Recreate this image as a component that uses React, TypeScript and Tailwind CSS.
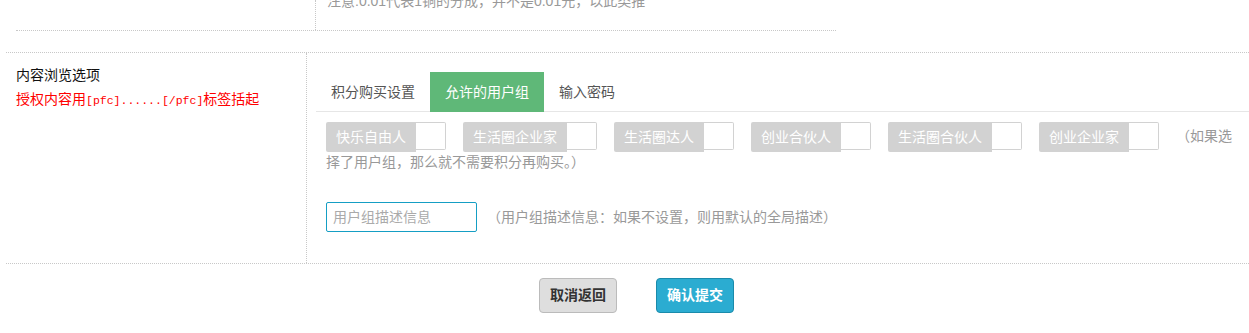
import React from 'react'

const groups = ['快乐自由人', '生活圈企业家', '生活圈达人', '创业合伙人', '生活圈合伙人', '创业企业家']

const Check: React.FC<{ label: string }> = ({ label }) => (
  <span className="inline-flex h-[30px] align-middle mr-[17px] cursor-pointer">
    <span className="bg-[#d2d2d2] text-white px-[10px] leading-[30px] h-[30px] rounded-l-[2px]">{label}</span>
    <span className="w-[30px] h-[28px] bg-white border border-l-0 border-[#d2d2d2] rounded-r-[2px]" />
  </span>
)

const App: React.FC = () => {
  return (
    <div
      className="w-full h-[333px] overflow-hidden bg-white text-[14px] text-[#333]"
      style={{ fontFamily: '"Liberation Sans", "Noto Sans CJK SC", sans-serif' }}
    >
      {/* previous row, scrolled off */}
      <div className="ml-[16px] w-[820px] h-[31px] flex border-b border-dotted border-[#c8c8c8] overflow-hidden">
        <div className="w-[299px] shrink-0" />
        <div className="flex-1 border-l border-dotted border-[#c8c8c8] pl-[11px]">
          <p className="-mt-[9px] leading-[20px] text-[#999]">注意:0.01代表1铜的分成，并不是0.01元，以此类推</p>
        </div>
      </div>

      {/* content browse options */}
      <div className="mt-[21px] ml-[6px] flex border-y border-dotted border-[#c8c8c8]">
        <div className="w-[301px] shrink-0 border-r border-dotted border-[#c8c8c8] px-[10px] pt-[10px] leading-[24px]">
          <div className="text-[#111]">内容浏览选项</div>
          <div className="text-[#f00]">
            授权内容用<span className="text-[11.5px]" style={{ fontFamily: '"Liberation Mono", monospace' }}>[pfc]......[/pfc]</span>标签括起
          </div>
        </div>

        <div className="flex-1 pl-[9px] pt-[19px] pb-[21px]">
          <div className="flex h-[40px] border-b border-[#e6e6e6] text-[#555]">
            <div className="px-[15px] leading-[40px]">积分购买设置</div>
            <div className="px-[15px] h-[40px] leading-[40px] bg-[#5fb878] text-white">允许的用户组</div>
            <div className="px-[15px] leading-[40px]">输入密码</div>
          </div>

          <div className="px-[10px] pt-[10px] pb-[10px]">
            <p className="leading-[20px] text-[#999]">
              {groups.map((g) => (
                <Check key={g} label={g} />
              ))}
              （如果选择了用户组，那么就不需要积分再购买。）
            </p>

            <div className="mt-[30px] flex items-center gap-[10px]">
              <input
                placeholder="用户组描述信息"
                className="w-[151px] h-[30px] px-[6px] border border-[#159ec4] rounded-[2px] outline-none placeholder:text-[#aaa]"
              />
              <span className="text-[#999]">（用户组描述信息：如果不设置，则用默认的全局描述）</span>
            </div>
          </div>
        </div>
      </div>

      <div className="mt-[14px] flex justify-center gap-[39px] pl-[24px]">
        <button className="w-[78px] h-[35px] rounded-[4px] bg-[#dedede] border border-[#bbb] font-bold text-[#333]">取消返回</button>
        <button className="w-[78px] h-[35px] rounded-[4px] bg-[#2bacd1] border border-[#1a8bab] font-bold text-white">确认提交</button>
      </div>
    </div>
  )
}

export default App
